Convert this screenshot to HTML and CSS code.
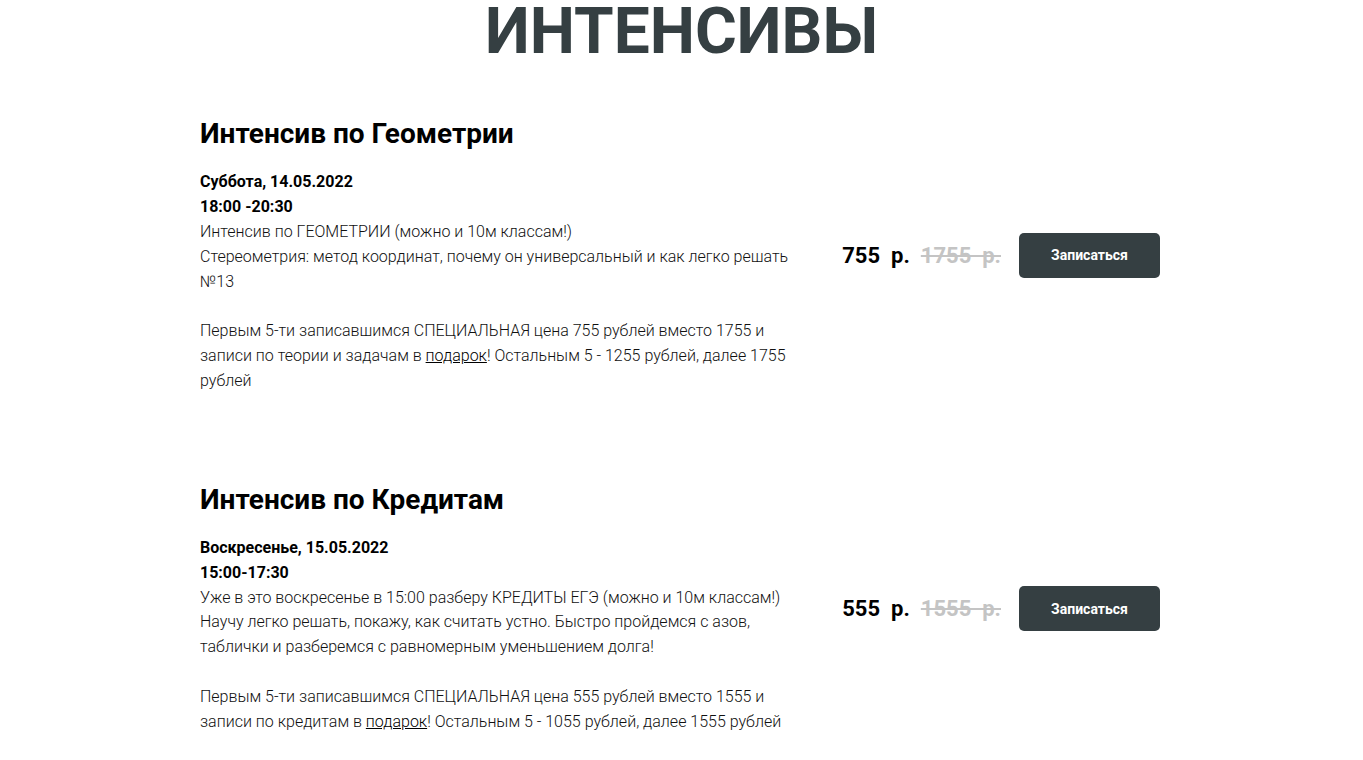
FILE: index.html
```html
<!DOCTYPE html>
<html lang="ru">
<head>
<meta charset="utf-8">
<title>Интенсивы</title>
<link rel="stylesheet" href="styles.css">
</head>
<body>
<h1 class="page-title">ИНТЕНСИВЫ</h1>
<div class="list">
  <div class="item">
    <div class="info">
      <h2 class="item-title">Интенсив по Геометрии</h2>
      <div class="item-text">
        <strong>Суббота, 14.05.2022</strong><br>
        <strong>18:00 -20:30</strong><br>
        Интенсив по ГЕОМЕТРИИ (можно и 10м классам!)<br>
        Стереометрия: метод координат, почему он универсальный и как легко решать №13<br>
        <br>
        Первым 5-ти записавшимся СПЕЦИАЛЬНАЯ цена 755 рублей вместо 1755 и записи по теории и задачам в <a href="#">подарок</a>! Остальным 5 - 1255 рублей, далее 1755 рублей
      </div>
    </div>
    <div class="buy">
      <div class="price">755&nbsp; р.</div>
      <div class="old-price">1755&nbsp; р.</div>
      <a class="btn" href="#">Записаться</a>
    </div>
  </div>
  <div class="item">
    <div class="info">
      <h2 class="item-title">Интенсив по Кредитам</h2>
      <div class="item-text">
        <strong>Воскресенье, 15.05.2022</strong><br>
        <strong>15:00-17:30</strong><br>
        Уже в это воскресенье в 15:00 разберу КРЕДИТЫ ЕГЭ (можно и 10м классам!)<br>
        Научу легко решать, покажу, как считать устно. Быстро пройдемся с азов, таблички и разберемся с равномерным уменьшением долга!<br>
        <br>
        Первым 5-ти записавшимся СПЕЦИАЛЬНАЯ цена 555 рублей вместо 1555 и записи по кредитам в <a href="#">подарок</a>! Остальным 5 - 1055 рублей, далее 1555 рублей
      </div>
    </div>
    <div class="buy">
      <div class="price">555&nbsp; р.</div>
      <div class="old-price">1555&nbsp; р.</div>
      <a class="btn" href="#">Записаться</a>
    </div>
  </div>
</div>
</body>
</html>
```

FILE: styles.css
```css
html, body {
  margin: 0;
  padding: 0;
  background: #ffffff;
}
body {
  padding-right: 3px;
  font-family: Roboto, "Liberation Sans", sans-serif;
  color: #000;
}
.page-title {
  margin: 0;
  padding-left: 3px;
  text-align: center;
  font-size: 64px;
  line-height: 1;
  font-weight: 700;
  color: #353f42;
  letter-spacing: 0;
}
.list {
  width: 960px;
  margin: 0 auto;
  padding-top: 53px;
  display: flex;
  flex-direction: column;
  gap: 89px;
}
.item {
  display: flex;
  align-items: center;
}
.info {
  width: 600px;
  flex: none;
}
.item-title {
  margin: 0 0 19px;
  font-size: 28px;
  line-height: 1.23;
  font-weight: 700;
}
.item-text {
  font-size: 16px;
  line-height: 1.55;
  font-weight: 300;
  color: #111;
}
.item-text strong {
  font-weight: 700;
  color: #000;
}
.item-text a {
  color: #000;
  text-decoration: underline;
}
.buy {
  margin-left: auto;
  display: flex;
  align-items: center;
}
.price {
  font-size: 22px;
  font-weight: 700;
  white-space: pre;
}
.old-price {
  margin-left: 11px;
  font-size: 22px;
  font-weight: 700;
  color: #c4c4c4;
  text-decoration: line-through;
}
.btn {
  margin-left: 18px;
  width: 141px;
  height: 45px;
  display: flex;
  align-items: center;
  justify-content: center;
  background: #353f42;
  color: #fff;
  border-radius: 5px;
  font-size: 14px;
  font-weight: 700;
  text-decoration: none;
}
```
